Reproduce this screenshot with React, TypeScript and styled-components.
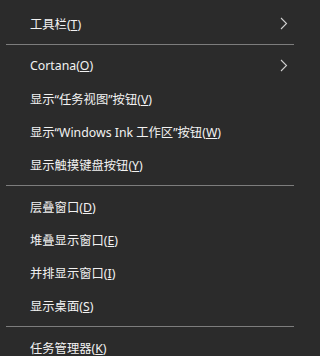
import React from 'react';
import styled, { createGlobalStyle } from 'styled-components';

const GlobalStyle = createGlobalStyle`
  html, body {
    margin: 0;
    padding: 0;
    background: #2b2b2b;
  }
`;

type Entry =
  | { kind: 'item'; label: string; mnemonic: string; submenu?: boolean }
  | { kind: 'separator' };

const entries: Entry[] = [
  { kind: 'item', label: '工具栏', mnemonic: 'T', submenu: true },
  { kind: 'separator' },
  { kind: 'item', label: 'Cortana', mnemonic: 'O', submenu: true },
  { kind: 'item', label: '显示“任务视图”按钮', mnemonic: 'V' },
  { kind: 'item', label: '显示“Windows Ink 工作区”按钮', mnemonic: 'W' },
  { kind: 'item', label: '显示触摸键盘按钮', mnemonic: 'Y' },
  { kind: 'separator' },
  { kind: 'item', label: '层叠窗口', mnemonic: 'D' },
  { kind: 'item', label: '堆叠显示窗口', mnemonic: 'E' },
  { kind: 'item', label: '并排显示窗口', mnemonic: 'I' },
  { kind: 'item', label: '显示桌面', mnemonic: 'S' },
  { kind: 'separator' },
  { kind: 'item', label: '任务管理器', mnemonic: 'K' },
];

const Menu = styled.div`
  width: 300px;
  height: 356px;
  overflow: hidden;
  box-sizing: border-box;
  padding-top: 7px;
  display: flex;
  flex-direction: column;
  background: #2b2b2b;
  font-family: 'Noto Sans', 'Noto Sans CJK SC', sans-serif;
  font-size: 12.3px;
  color: #f2f2f2;
`;

const Item = styled.div`
  flex: 0 0 33px;
  display: flex;
  align-items: center;
  justify-content: space-between;
  padding: 0 10px 0 30px;
  white-space: nowrap;
`;

const Key = styled.span`
  text-decoration: underline;
  text-underline-offset: 1px;
`;

const Separator = styled.div`
  flex: 0 0 9px;
  display: flex;
  align-items: flex-start;
  padding: 4px 6px 0;
  box-sizing: border-box;

  &::after {
    content: '';
    flex: 1;
    height: 1px;
    background: #7d7d7d;
  }
`;

const Chevron = styled.svg`
  width: 8px;
  height: 13px;
  margin-right: 2px;
`;

const SubmenuArrow = () => (
  <Chevron viewBox="0 0 8 13">
    <polyline points="1,1 6.5,6.5 1,12" fill="none" stroke="#d0d0d0" strokeWidth="1.1" />
  </Chevron>
);

export default function App() {
  return (
    <>
      <GlobalStyle />
      <Menu>
        {entries.map((entry, i) =>
          entry.kind === 'separator' ? (
            <Separator key={i} />
          ) : (
            <Item key={i}>
              <span>
                {entry.label}(<Key>{entry.mnemonic}</Key>)
              </span>
              {entry.submenu && <SubmenuArrow />}
            </Item>
          )
        )}
      </Menu>
    </>
  );
}
